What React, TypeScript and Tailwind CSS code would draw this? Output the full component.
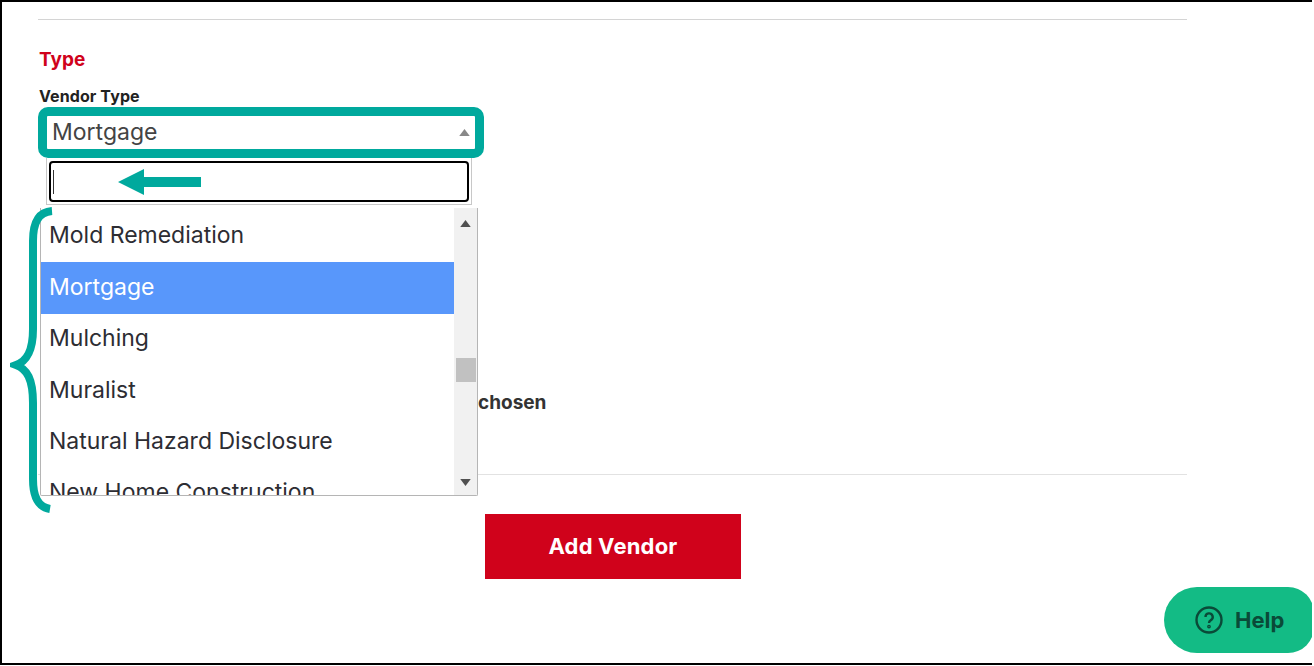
const vendorTypes = [
  "Mold Remediation",
  "Mortgage",
  "Mulching",
  "Muralist",
  "Natural Hazard Disclosure",
  "New Home Construction",
];

function Triangle({ up, className }: { up?: boolean; className: string }) {
  return (
    <svg viewBox="0 0 12 8" className={className} fill="currentColor">
      <path d={up ? "M6 0 12 8H0Z" : "M0 0H12L6 8Z"} />
    </svg>
  );
}

function Annotations() {
  return (
    <>
      <svg
        className="absolute left-[116px] top-[167px] z-20 h-[26px] w-[83px] text-[#00a99d]"
        viewBox="0 0 83 26"
        fill="currentColor"
      >
        <path d="M0 13 26 0V8H83V18H26V26Z" />
      </svg>
      <svg
        className="absolute left-[8px] top-[205px] z-20 h-[308px] w-[46px] text-[#00a99d]"
        viewBox="0 0 46 308"
        fill="none"
        stroke="currentColor"
        strokeWidth="8"
      >
        <path d="M42 4C28 5 23 16 23 34V122C23 144 17 154 6 158C17 162 23 172 23 196V272C23 290 28 300 40 302" />
      </svg>
    </>
  );
}

function VendorDropdown() {
  return (
    <div className="absolute left-[2px] top-[51px] z-10 h-[338px] w-[438px] bg-transparent">
      <div className="mx-[6px] h-[47px] border-x border-b border-[#c8c8c8] bg-white px-[2px] pt-[3px]">
        <div className="flex h-[41px] items-center rounded-[4px] border-2 border-black bg-white pl-[2px]">
          <span className="h-[24px] w-px bg-[#333]" />
        </div>
      </div>
      <div className="mt-[3px] flex h-[288px] overflow-hidden rounded-b-[2px] border border-t-0 border-[#b5b5b5] bg-white">
        <ul className="min-w-0 flex-1 overflow-hidden pt-[3px] text-[23px] text-[#2d2d33]">
          {vendorTypes.map((t) => (
            <li
              key={t}
              className={`flex h-[51.4px] shrink-0 items-center pb-[2px] pl-[8px] whitespace-nowrap ${
                t === "Mortgage" ? "bg-[#5897fb] text-white" : ""
              }`}
            >
              {t}
            </li>
          ))}
        </ul>
        <div className="relative w-[23px] shrink-0 bg-[#f1f1f1]">
          <Triangle up className="absolute left-[6px] top-[12px] h-[7px] w-[11px] text-[#505050]" />
          <div className="absolute left-[2px] top-[150px] h-[24px] w-[20px] bg-[#c1c1c1]" />
          <Triangle className="absolute bottom-[9px] left-[6px] h-[7px] w-[11px] text-[#505050]" />
        </div>
      </div>
    </div>
  );
}

export default function App() {
  return (
    <div className="relative h-[665px] w-[1312px] overflow-hidden border-y-2 border-l-2 border-black bg-white font-['Inter',sans-serif]">
      <div className="ml-[36px] w-[1149px]">
        <div className="mt-[17px] h-px bg-[#d4d4d4]" />
        <h2 className="mt-[27px] pl-[1px] text-[19px] leading-[26px] font-bold text-[#d0021b]">Type</h2>
        <div className="mt-[13px] pl-[1px] text-[16px] leading-[20px] font-bold tracking-[0.1px] text-[#222]">Vendor Type</div>

        <div className="relative mt-[1px] w-[446px]">
          <div className="flex h-[51px] items-center justify-between rounded-[10px] border-[9px] border-[#00a99d] bg-white pl-[5px] pr-[5px] text-[23px] text-[#444]">
            <span>Mortgage</span>
            <Triangle up className="h-[7px] w-[11px] text-[#888]" />
          </div>
          <VendorDropdown />
        </div>

        <div className="mt-[233px] pl-[440px] text-[19px] leading-[24px] font-bold whitespace-nowrap text-[#333]">
          chosen
        </div>
        <div className="mt-[59px] h-px bg-[#e2e2e2]" />
        <div className="mt-[39px] pl-[447px]">
          <button className="flex h-[65px] w-[256px] items-center justify-center bg-[#d0021b] text-[22px] font-bold tracking-[0.2px] text-white">
            Add Vendor
          </button>
        </div>
      </div>

      <Annotations />

      <button className="absolute left-[1162px] top-[585px] flex h-[66px] w-[150px] items-center rounded-l-[33px] rounded-r-[26px] bg-[#13bb85] pl-[31px] text-[#0a4a38]">
        <svg viewBox="0 0 28 28" className="h-[28px] w-[28px]" fill="none" stroke="currentColor" strokeWidth="2.4">
          <circle cx="14" cy="14" r="12.5" />
          <path d="M10.5 11a3.6 3.6 0 1 1 5.4 3.1c-1.2.7-1.9 1.4-1.9 2.9" />
          <circle cx="14" cy="20.6" r="0.7" />
        </svg>
        <span className="ml-[12px] text-[22px] font-bold">Help</span>
      </button>
    </div>
  );
}
